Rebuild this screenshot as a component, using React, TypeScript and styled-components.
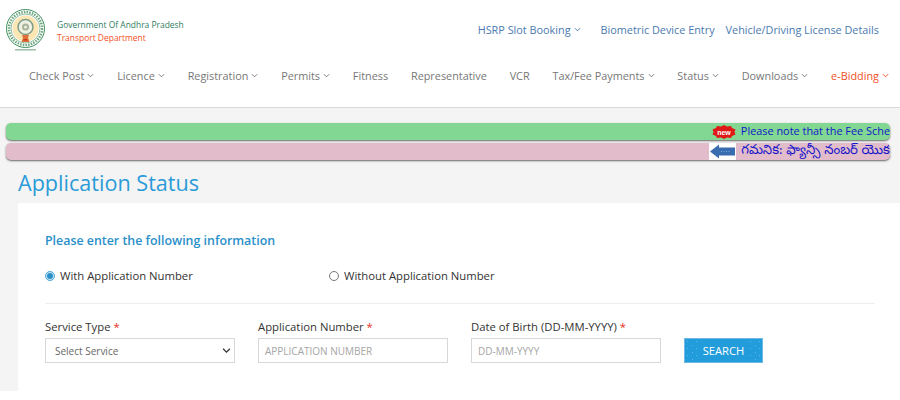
import React from 'react'
import styled, { createGlobalStyle } from 'styled-components'

const GlobalStyle = createGlobalStyle`
  html, body {
    margin: 0;
    padding: 0;
    background: #f4f4f4;
    font-family: "Open Sans", "Noto Sans", sans-serif;
    overflow: hidden;
  }
  * { box-sizing: border-box; }
`

const Page = styled.div`
  width: 900px;
  height: 400px;
  overflow: hidden;
`

const Header = styled.header`
  height: 108px;
  background: #fff;
  border-bottom: 1px solid #d9d9d9;
`

const TopRow = styled.div`
  display: flex;
  justify-content: space-between;
  align-items: flex-start;
  height: 56px;
  padding: 9px 21px 0 6px;
`

const Brand = styled.div`
  display: flex;
  gap: 11px;
  align-items: flex-start;
`

const BrandText = styled.div`
  padding-top: 10px;
  font-size: 8.45px;
  line-height: 12.5px;
  font-weight: 500;
`

const BrandTitle = styled.div`
  color: #2f7d5f;
`

const BrandSub = styled.div`
  color: #f0501e;
`

const TopLinks = styled.nav`
  display: flex;
  padding-top: 12px;
  font-size: 10.85px;
  line-height: 17px;
  color: #4a7ab0;
`

const TopLink = styled.span<{ $gap: number }>`
  display: flex;
  align-items: center;
  gap: 3px;
  margin-left: ${({ $gap }) => $gap}px;
`

const MainNav = styled.nav`
  display: flex;
  justify-content: space-between;
  padding: 11px 11px 0 29px;
  font-size: 10.85px;
  line-height: 17px;
  color: #777;
`

const NavItem = styled.span<{ $active?: boolean }>`
  display: flex;
  align-items: center;
  gap: 3px;
  color: ${({ $active }) => ($active ? '#f0501e' : '#777')};
`

const Tickers = styled.div`
  display: flex;
  flex-direction: column;
  gap: 3px;
  margin: 15px 10px 0 6px;
`

const Ticker = styled.div<{ $bg: string }>`
  display: flex;
  justify-content: flex-end;
  align-items: center;
  gap: 5px;
  height: 17px;
  overflow: hidden;
  background: ${({ $bg }) => $bg};
  border-radius: 5px;
  box-shadow: 0 1px 2px #666;
  color: #1414c8;
  white-space: nowrap;
  font-size: 10.9px;
`

const TickerText = styled.span`
  padding-bottom: 2px;
`

const TeluguText = styled.span`
  font-size: 13.2px;
  font-family: "Noto Sans Telugu", "Noto Sans", "DejaVu Sans", sans-serif;
`

const Title = styled.h1`
  margin: 8px 0 0 18px;
  height: 35px;
  font-size: 21.6px;
  line-height: 30px;
  font-weight: 400;
  color: #2a9bd8;
`

const Card = styled.section`
  margin-left: 18px;
  height: 188px;
  background: #fff;
  padding: 29px 25px 0 27px;
`

const BottomStrip = styled.div`
  height: 9px;
  background: #fff;
`

const CardHeading = styled.h2`
  margin: 0;
  font-size: 12.4px;
  line-height: 17px;
  font-weight: 600;
  color: #2a8fc9;
`

const RadioRow = styled.div`
  display: flex;
  margin-top: 19px;
  padding-bottom: 20px;
  border-bottom: 1px solid #eee;
`

const RadioLabel = styled.label`
  display: flex;
  align-items: center;
  gap: 5px;
  width: 284px;
  font-size: 11.3px;
  line-height: 15px;
  font-weight: 500;
  color: #333;
`

const RadioDot = styled.span<{ $checked?: boolean }>`
  width: 10px;
  height: 10px;
  border-radius: 50%;
  border: 1px solid ${({ $checked }) => ($checked ? '#5ab0e0' : '#777')};
  background: ${({ $checked }) => ($checked ? '#2a8fc9' : '#fff')};
  box-shadow: ${({ $checked }) => ($checked ? 'inset 0 0 0 1px #d5ecf8' : 'none')};
`

const FieldRow = styled.div`
  display: flex;
  align-items: flex-end;
  gap: 23px;
  margin-top: 15px;
`

const Field = styled.div`
  width: 190px;
`

const FieldLabel = styled.div`
  font-size: 11.3px;
  line-height: 15px;
  font-weight: 500;
  color: #333;
  margin-bottom: 4px;
`

const Req = styled.span`
  color: #e8321e;
`

const BoxBase = styled.div`
  height: 25px;
  border: 1px solid #d8d8d8;
  font-size: 10px;
  display: flex;
  align-items: center;
  background: #fff;
`

const SelectBox = styled(BoxBase)`
  justify-content: space-between;
  padding: 0 3px 0 9px;
  color: #666;
`

const InputBox = styled(BoxBase)`
  padding: 0 6px;
  color: #a5a5a5;
`

const SearchButton = styled.button`
  width: 79px;
  height: 25px;
  border: 1px solid #6db9e6;
  background-color: #229cdb;
  background-image:
    radial-gradient(circle, #5db5e6 0.5px, transparent 1px),
    radial-gradient(circle, #5db5e6 0.5px, transparent 1px);
  background-size: 9px 7px, 9px 7px;
  background-position: 3px 3px, 7px 6px;
  color: #fff;
  font-family: inherit;
  font-size: 11.2px;
  font-weight: 500;
  padding: 0;
`

const SearchLabel = styled.span`
  display: inline-block;
  padding: 2px 3px;
  background: #229cdb;
`

const Chevron = ({ color = 'currentColor', size = 7 }: { color?: string; size?: number }) => (
  <svg width={size} height={size} viewBox="0 0 8 8" fill="none" stroke={color} strokeWidth="1.1">
    <path d="M1 2.5 L4 5.5 L7 2.5" />
  </svg>
)

const Emblem = () => (
  <svg width="40" height="42" viewBox="0 0 40 42">
    <circle cx="19.500" cy="19.500" r="19" fill="#fff" stroke="#3f8f5f" strokeWidth="1" />
    <circle cx="19.500" cy="19.500" r="16.500" fill="none" stroke="#6aa67c" strokeWidth="2.500" strokeDasharray="1.500 1.200" />
    <circle cx="19.500" cy="19.500" r="14.500" fill="none" stroke="#3f8f5f" strokeWidth=".6" />
    <circle cx="19.500" cy="19.500" r="13" fill="#fbe6b4" />
    <circle cx="19.500" cy="18" r="7.500" fill="#eef0e2" stroke="#7f9c86" strokeWidth="1.500" />
    <circle cx="19.500" cy="18" r="3.500" fill="#a9b39c" />
    <circle cx="19.500" cy="18" r="1.500" fill="#eef0e2" />
    <path d="M16 26 H23 L22 29 L23.500 33 H15.500 L17 29 Z" fill="#e0703a" />
    <rect x="17.500" y="30" width="4" height="1.500" fill="#c9361e" />
    <rect x="9" y="40" width="21" height="1.500" fill="#9dbda6" />
  </svg>
)

const NewBadge = () => (
  <svg width="24" height="14" viewBox="0 0 24 14">
    <path d="M12 0 L15 1.500 L19 1 L20 3 L23.500 4.500 L22.500 7 L23.500 9.500 L20 11 L19 13 L15 12.500 L12 14 L9 12.500 L5 13 L4 11 L.5 9.500 L1.500 7 L.5 4.500 L4 3 L5 1 L9 1.500 Z" fill="#e01818" />
    <text x="12" y="9.500" textAnchor="middle" fontSize="7" fontWeight="700" fill="#fff" fontFamily="'Liberation Sans', sans-serif">new</text>
  </svg>
)

const ArrowBadge = () => (
  <svg width="27" height="17" viewBox="0 0 27 17">
    <rect width="27" height="17" fill="#fff" />
    <path d="M1 8.500 L10 1.500 V4.500 H26 V12.500 H10 V15.500 Z" fill="#3a6db0" />
    <path d="M12 8.500 H22" stroke="#6fb0e0" strokeWidth="1" strokeDasharray="1 1.500" />
  </svg>
)

const navItems: { label: string; caret?: boolean; active?: boolean }[] = [
  { label: 'Check Post', caret: true },
  { label: 'Licence', caret: true },
  { label: 'Registration', caret: true },
  { label: 'Permits', caret: true },
  { label: 'Fitness' },
  { label: 'Representative' },
  { label: 'VCR' },
  { label: 'Tax/Fee Payments', caret: true },
  { label: 'Status', caret: true },
  { label: 'Downloads', caret: true },
  { label: 'e-Bidding', caret: true, active: true },
]

const App = () => (
  <Page>
    <GlobalStyle />
    <Header>
      <TopRow>
        <Brand>
          <Emblem />
          <BrandText>
            <BrandTitle>Government Of Andhra Pradesh</BrandTitle>
            <BrandSub>Transport Department</BrandSub>
          </BrandText>
        </Brand>
        <TopLinks>
          <TopLink $gap={0}>HSRP Slot Booking <Chevron /></TopLink>
          <TopLink $gap={20}>Biometric Device Entry</TopLink>
          <TopLink $gap={11}>Vehicle/Driving License Details</TopLink>
        </TopLinks>
      </TopRow>
      <MainNav>
        {navItems.map(item => (
          <NavItem key={item.label} $active={item.active}>
            {item.label}
            {item.caret && <Chevron />}
          </NavItem>
        ))}
      </MainNav>
    </Header>
    <Tickers>
      <Ticker $bg="#82d892">
        <NewBadge />
        <TickerText>Please note that the Fee Sche</TickerText>
      </Ticker>
      <Ticker $bg="#e3bccb">
        <ArrowBadge />
        <TeluguText>గమనిక: ఫ్యాన్సీ నంబర్ యొక</TeluguText>
      </Ticker>
    </Tickers>
    <Title>Application Status</Title>
    <Card>
      <CardHeading>Please enter the following information</CardHeading>
      <RadioRow>
        <RadioLabel><RadioDot $checked />With Application Number</RadioLabel>
        <RadioLabel><RadioDot />Without Application Number</RadioLabel>
      </RadioRow>
      <FieldRow>
        <Field>
          <FieldLabel>Service Type <Req>*</Req></FieldLabel>
          <SelectBox>Select Service <Chevron color="#333" size={9} /></SelectBox>
        </Field>
        <Field>
          <FieldLabel>Application Number <Req>*</Req></FieldLabel>
          <InputBox>APPLICATION NUMBER</InputBox>
        </Field>
        <Field>
          <FieldLabel>Date of Birth (DD-MM-YYYY) <Req>*</Req></FieldLabel>
          <InputBox>DD-MM-YYYY</InputBox>
        </Field>
        <SearchButton><SearchLabel>SEARCH</SearchLabel></SearchButton>
      </FieldRow>
    </Card>
    <BottomStrip />
  </Page>
)

export default App
